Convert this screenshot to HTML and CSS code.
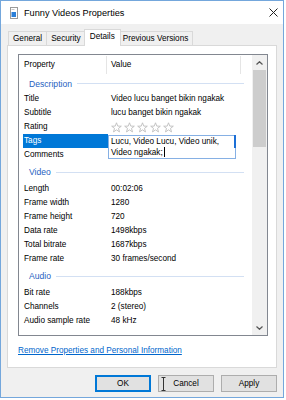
FILE: index.html
```html
<!DOCTYPE html>
<html>
<head>
<meta charset="utf-8">
<link rel="stylesheet" href="styles.css">
</head>
<body>
<div class="window">
  <div class="titlebar">
    <svg class="app-icon" width="8" height="12" viewBox="0 0 8 12"><rect x="0.5" y="0.5" width="7" height="11" fill="#fff" stroke="#9a9a9a"/><rect x="1.5" y="5" width="4.5" height="5" fill="#2a7fd8"/><rect x="1.5" y="2" width="3" height="1" fill="#c8c8c8"/></svg>
    <span class="title">Funny Videos Properties</span>
    <svg class="close" width="9" height="9" viewBox="0 0 9 9"><path d="M0.5 0.5 L8.5 8.5 M8.5 0.5 L0.5 8.5" stroke="#222" stroke-width="1"/></svg>
  </div>
  <div class="client">
    <div class="tabs">
      <div class="tab">General</div>
      <div class="tab">Security</div>
      <div class="tab active">Details</div>
      <div class="tab">Previous Versions</div>
    </div>
    <div class="panel">
      <div class="list">
        <div class="list-body">
          <div class="list-header">
            <span class="col-prop">Property</span>
            <span class="col-value">Value</span>
          </div>
          <div class="group first"><span class="group-name">Description</span><span class="group-line"></span></div>
          <div class="row"><span class="prop">Title</span><span class="val">Video lucu banget bikin ngakak</span></div>
          <div class="row"><span class="prop">Subtitle</span><span class="val">lucu banget bikin ngakak</span></div>
          <div class="row"><span class="prop">Rating</span><span class="val stars">
            <svg width="11" height="11" viewBox="0 0 11 11"><path class="star" d="M5.5 0.8 L6.8 4.1 L10.3 4.2 L7.5 6.4 L8.5 9.9 L5.5 7.9 L2.5 9.9 L3.5 6.4 L0.7 4.2 L4.2 4.1 Z"/></svg>
            <svg width="11" height="11" viewBox="0 0 11 11"><path class="star" d="M5.5 0.8 L6.8 4.1 L10.3 4.2 L7.5 6.4 L8.5 9.9 L5.5 7.9 L2.5 9.9 L3.5 6.4 L0.7 4.2 L4.2 4.1 Z"/></svg>
            <svg width="11" height="11" viewBox="0 0 11 11"><path class="star" d="M5.5 0.8 L6.8 4.1 L10.3 4.2 L7.5 6.4 L8.5 9.9 L5.5 7.9 L2.5 9.9 L3.5 6.4 L0.7 4.2 L4.2 4.1 Z"/></svg>
            <svg width="11" height="11" viewBox="0 0 11 11"><path class="star" d="M5.5 0.8 L6.8 4.1 L10.3 4.2 L7.5 6.4 L8.5 9.9 L5.5 7.9 L2.5 9.9 L3.5 6.4 L0.7 4.2 L4.2 4.1 Z"/></svg>
            <svg width="11" height="11" viewBox="0 0 11 11"><path class="star" d="M5.5 0.8 L6.8 4.1 L10.3 4.2 L7.5 6.4 L8.5 9.9 L5.5 7.9 L2.5 9.9 L3.5 6.4 L0.7 4.2 L4.2 4.1 Z"/></svg>
          </span></div>
          <div class="row selected"><span class="prop">Tags</span><span class="val"></span>
            <div class="editbox">Lucu, Video Lucu, Video unik,<br>Video ngakak;<span class="caret"></span></div>
          </div>
          <div class="row"><span class="prop">Comments</span><span class="val"></span></div>
          <div class="group"><span class="group-name">Video</span><span class="group-line"></span></div>
          <div class="row"><span class="prop">Length</span><span class="val">00:02:06</span></div>
          <div class="row"><span class="prop">Frame width</span><span class="val">1280</span></div>
          <div class="row"><span class="prop">Frame height</span><span class="val">720</span></div>
          <div class="row"><span class="prop">Data rate</span><span class="val">1498kbps</span></div>
          <div class="row"><span class="prop">Total bitrate</span><span class="val">1687kbps</span></div>
          <div class="row"><span class="prop">Frame rate</span><span class="val">30 frames/second</span></div>
          <div class="group"><span class="group-name">Audio</span><span class="group-line"></span></div>
          <div class="row"><span class="prop">Bit rate</span><span class="val">188kbps</span></div>
          <div class="row"><span class="prop">Channels</span><span class="val">2 (stereo)</span></div>
          <div class="row"><span class="prop">Audio sample rate</span><span class="val">48 kHz</span></div>
        </div>
        <div class="scrollbar">
          <div class="sb-btn"><svg width="7" height="4" viewBox="0 0 7 4"><path d="M0.5 3.5 L3.5 0.7 L6.5 3.5" fill="none" stroke="#555" stroke-width="1.2"/></svg></div>
          <div class="sb-track"><div class="sb-thumb"></div></div>
          <div class="sb-btn"><svg width="7" height="4" viewBox="0 0 7 4"><path d="M0.5 0.5 L3.5 3.3 L6.5 0.5" fill="none" stroke="#555" stroke-width="1.2"/></svg></div>
        </div>
      </div>
      <a class="link" href="#">Remove Properties and Personal Information</a>
    </div>
    <div class="buttons">
      <div class="btn default">OK</div>
      <div class="btn">Cancel<svg class="ibeam" width="5" height="14" viewBox="0 0 5 14"><path d="M0.5 0.5 H4.5 M2.5 0.5 V13.5 M0.5 13.5 H4.5" stroke="#333" stroke-width="1" fill="none"/></svg></div>
      <div class="btn">Apply</div>
    </div>
  </div>
</div>
</body>
</html>
```
FILE: styles.css
```css
body {
  margin: 0;
  background: #fff;
  font-family: "Liberation Sans", Arial, sans-serif;
  font-size: 8.2px;
  color: #000;
}

.window {
  width: 284px;
  height: 398px;
  box-sizing: border-box;
  border: 1px solid #74a7dc;
  background: #f0f0f0;
  display: flex;
  flex-direction: column;
}

.titlebar {
  height: 23px;
  flex: none;
  background: #fff;
  display: flex;
  align-items: center;
  padding: 0 5px 0 9px;
}

.app-icon {
  margin-right: 6px;
  flex: none;
}

.title {
  flex: 1;
  font-size: 9.2px;
  color: #000;
}

.close {
  flex: none;
}

.client {
  flex: 1;
  display: flex;
  flex-direction: column;
  padding: 5px 6px 5px;
  min-height: 0;
}

.tabs {
  display: flex;
  align-items: flex-end;
  height: 16px;
  padding-left: 1px;
  flex: none;
}

.tab {
  box-sizing: border-box;
  height: 14px;
  line-height: 13px;
  padding: 0 4px;
  border: 1px solid #d9d9d9;
  border-bottom: 0;
  margin-left: -1px;
  background: #f0f0f0;
  white-space: nowrap;
}

.tab:first-child {
  margin-left: 0;
}

.tab.active {
  height: 17px;
  line-height: 14px;
  margin: 0 -2px -1px -2px;
  padding: 0 5px;
  background: #fff;
  position: relative;
  z-index: 2;
}

.panel {
  flex: 1;
  background: #fff;
  border: 1px solid #d9d9d9;
  padding: 8px 8px 0 10px;
  display: flex;
  flex-direction: column;
  min-height: 0;
}

.list {
  height: 282px;
  box-sizing: border-box;
  border: 1px solid #828790;
  display: flex;
  flex: none;
}

.list-body {
  flex: 1;
  overflow: hidden;
  min-width: 0;
}

.list-header {
  height: 20px;
  display: flex;
  align-items: center;
}

.col-prop {
  box-sizing: border-box;
  width: 88px;
  padding-left: 5px;
  height: 18px;
  line-height: 18px;
  border-right: 1px solid #e5e5e5;
}

.col-value {
  box-sizing: border-box;
  width: 134px;
  padding-left: 4px;
  height: 18px;
  line-height: 18px;
  border-right: 1px solid #e5e5e5;
}

.group {
  height: 20px;
  display: flex;
  align-items: center;
  padding-left: 10px;
}

.group.first {
  height: 17px;
}

.group-name {
  color: #1f5fbf;
  font-size: 8.6px;
}

.group-line {
  flex: 1;
  height: 1px;
  background: #d3e0f3;
  margin: 0 8px 0 5px;
}

.row {
  height: 14px;
  line-height: 14px;
  display: flex;
  position: relative;
  white-space: nowrap;
}

.prop {
  box-sizing: border-box;
  width: 85px;
  margin-left: 4px;
  padding-left: 1px;
  flex: none;
}

.val {
  padding-left: 3px;
}

.row.selected .prop {
  background: #0078d7;
  color: #fff;
}

.stars {
  display: flex;
  align-items: center;
  gap: 2px;
}

.star {
  fill: none;
  stroke: #bdbdbd;
  stroke-width: 0.9;
}

.editbox {
  position: absolute;
  left: 89px;
  top: 1px;
  width: 128px;
  height: 24px;
  box-sizing: border-box;
  border: 1px solid #86b0e4;
  background: #fff;
  padding: 0 0 0 2px;
  line-height: 11px;
  z-index: 1;
}

.editbox::after {
  content: "";
  position: absolute;
  right: -1px;
  top: -1px;
  width: 2px;
  height: 13px;
  background: #1c6fd6;
}

.caret {
  display: inline-block;
  width: 1px;
  height: 10px;
  background: #000;
  vertical-align: -2px;
  margin-left: 1px;
}

.scrollbar {
  width: 15px;
  flex: none;
  background: #f0f0f0;
  display: flex;
  flex-direction: column;
}

.sb-btn {
  height: 15px;
  display: flex;
  align-items: center;
  justify-content: center;
  flex: none;
}

.sb-track {
  flex: 1;
}

.sb-thumb {
  margin-left: 1px;
  width: 13px;
  height: 77px;
  background: #cdcdcd;
}

.link {
  margin-top: 10px;
  line-height: 10px;
  color: #0066cc;
  text-decoration: underline;
  align-self: flex-start;
}

.buttons {
  display: flex;
  justify-content: flex-end;
  gap: 7px;
  margin-top: 7px;
  flex: none;
}

.btn {
  box-sizing: border-box;
  width: 56px;
  height: 17px;
  line-height: 15px;
  text-align: center;
  background: #e1e1e1;
  border: 1px solid #adadad;
  position: relative;
}

.btn.default {
  border-color: #0078d7;
  box-shadow: inset 0 0 0 1px #0078d7;
}

.ibeam {
  position: absolute;
  left: 2px;
  top: 1px;
}
```
